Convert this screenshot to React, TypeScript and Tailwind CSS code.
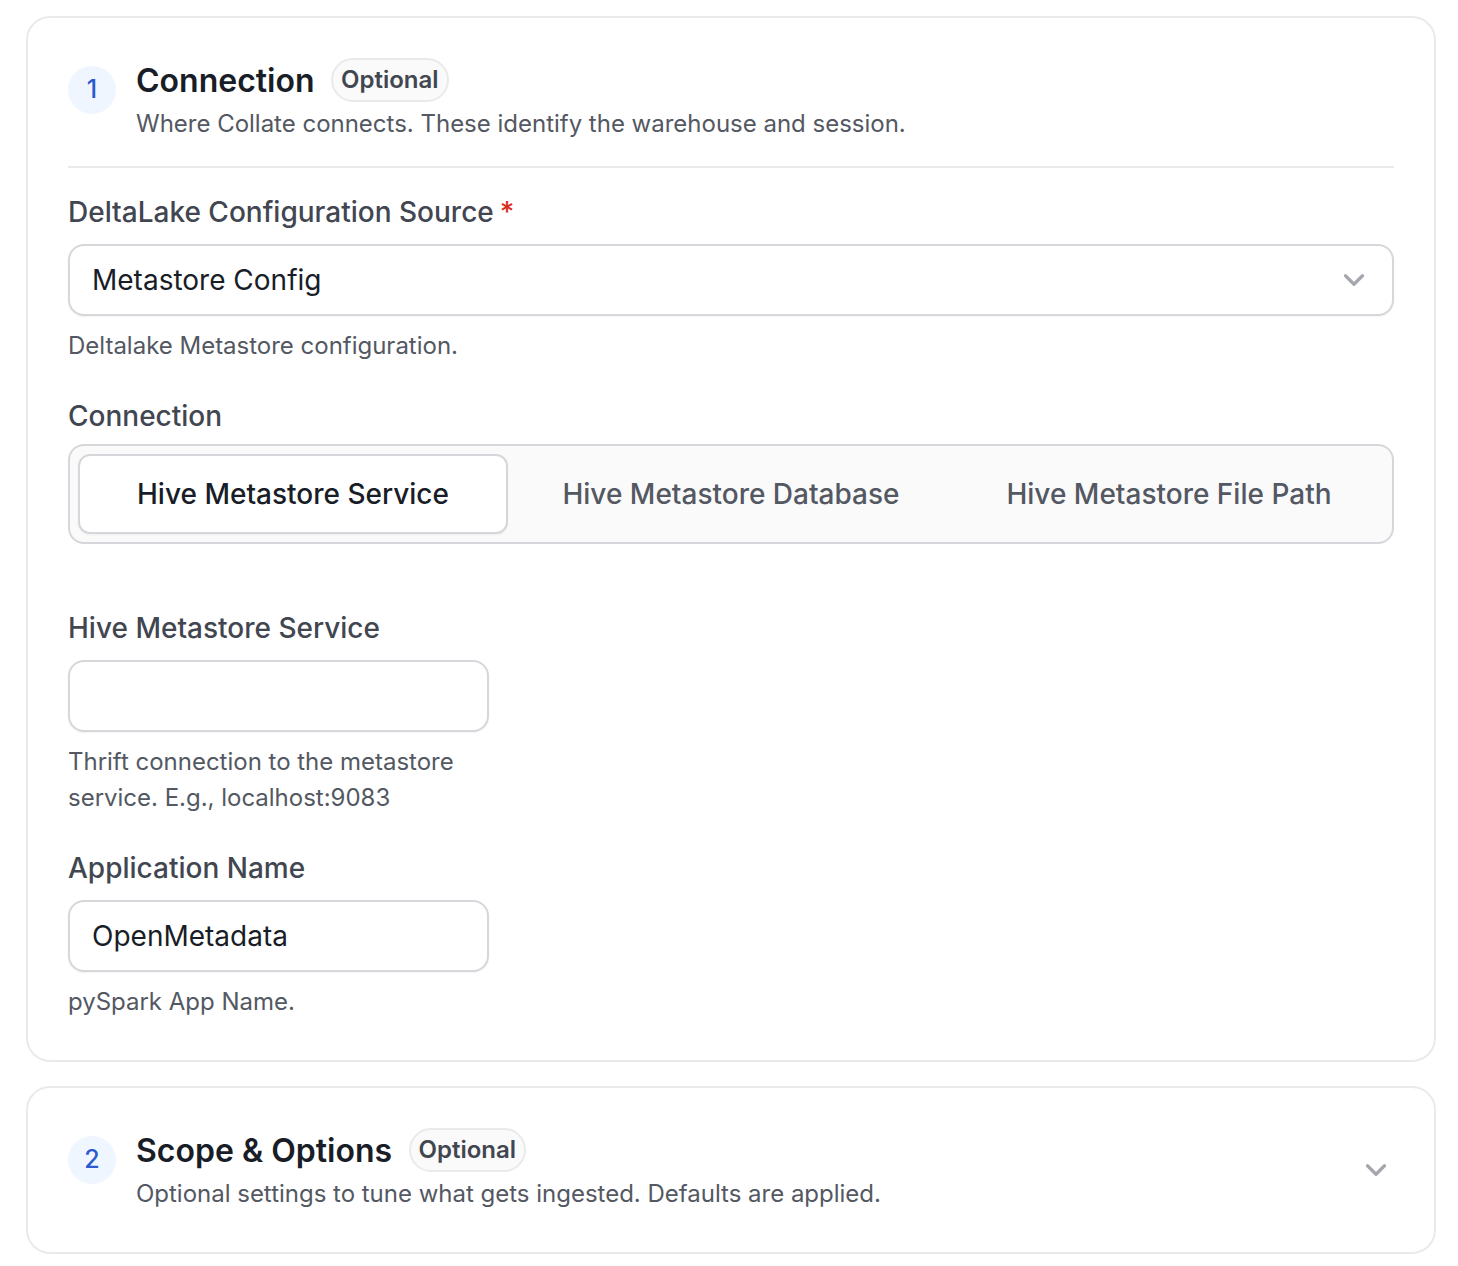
import React from 'react';
import { ChevronDown } from 'lucide-react';

const font = "font-['Inter',sans-serif]";

const SectionHeader: React.FC<{ step: number; title: string; description: string }> = ({
  step,
  title,
  description,
}) => {
  return (
    <div className="flex items-start gap-5">
      <div className="mt-2 flex h-12 w-12 shrink-0 items-center justify-center rounded-full bg-[#f0f6ff] text-[25px] font-medium text-[#2b5bd0]">
        {step}
      </div>
      <div>
        <div className="flex h-11 items-center gap-[16.5px]">
          <h2 className="pt-0.5 text-[32px] leading-[44px] font-semibold text-[#181d27]">{title}</h2>
          <span className="flex h-11 items-center rounded-full border-2 border-[#e9eaeb] bg-[#fafafa] px-2 text-[24px] font-semibold text-[#414651]">
            Optional
          </span>
        </div>
        <p className="mt-1 text-[24px] leading-9 tracking-[-0.01px] text-[#535862]">{description}</p>
      </div>
    </div>
  );
};

const Label: React.FC<{ children: React.ReactNode; required?: boolean }> = ({ children, required }) => (
  <div className="flex h-10 items-center text-[28px] font-medium text-[#414651]">
    {children}
    {required && <span className="ml-1.5 text-[#d92d20]">*</span>}
  </div>
);

const Help: React.FC<{ children: React.ReactNode }> = ({ children }) => (
  <p className="mt-3 text-[24px] leading-9 tracking-[-0.01px] text-[#535862]">{children}</p>
);

const TextBox: React.FC<{ value?: string }> = ({ value }) => (
  <div className="mt-3 flex h-[72px] w-[421px] items-center rounded-2xl border-2 border-[#d5d7da] bg-white px-[22px] text-[28px] text-[#181d27] shadow-xs">
    {value}
  </div>
);

export default function App() {
  return (
    <div className={`${font} min-h-screen bg-white pt-4 pr-[22px] pl-[26px]`}>
      {/* Step 1 */}
      <section className="rounded-3xl border-2 border-[#e9eaeb] px-10 pt-10 pb-10">
        <SectionHeader
          step={1}
          title="Connection"
          description="Where Collate connects. These identify the warehouse and session."
        />
        <div className="mt-6 h-0.5 bg-[#e9eaeb]" />

        <div className="mt-6">
          <Label required>DeltaLake Configuration Source</Label>
          <div className="mt-3 flex h-[72px] items-center justify-between rounded-2xl border-2 border-[#d5d7da] bg-white pr-[21px] pl-[22px] text-[28px] text-[#181d27] shadow-xs">
            <span>Metastore Config</span>
            <ChevronDown className="h-[34px] w-[34px] text-[#a4a7ae]" strokeWidth={2.25} />
          </div>
          <Help>Deltalake Metastore configuration.</Help>
        </div>

        <div className="mt-8">
          <Label>Connection</Label>
          <div className="mt-2 flex h-[100px] items-center gap-2 rounded-2xl border-2 border-[#d5d7da] bg-[#fafafa] px-2 text-[28px] font-medium text-[#535862]">
            <div className="flex h-20 flex-1 items-center justify-center rounded-xl border-2 border-[#d5d7da] bg-white text-[#181d27] shadow-xs">
              Hive Metastore Service
            </div>
            <div className="flex h-20 flex-1 items-center justify-center border-2 border-transparent">
              Hive Metastore Database
            </div>
            <div className="flex h-20 flex-1 items-center justify-center border-2 border-transparent">
              Hive Metastore File Path
            </div>
          </div>
        </div>

        <div className="mt-16">
          <Label>Hive Metastore Service</Label>
          <TextBox />
          <div className="w-[421px]">
            <Help>Thrift connection to the metastore service. E.g., localhost:9083</Help>
          </div>
        </div>

        <div className="mt-8">
          <Label>Application Name</Label>
          <TextBox value="OpenMetadata" />
          <Help>pySpark App Name.</Help>
        </div>
      </section>

      {/* Step 2 */}
      <section className="mt-6 flex items-center justify-between rounded-3xl border-2 border-[#e9eaeb] py-10 pr-[41px] pl-10">
        <SectionHeader
          step={2}
          title="Scope & Options"
          description="Optional settings to tune what gets ingested. Defaults are applied."
        />
        <ChevronDown className="h-[34px] w-[34px] text-[#a4a7ae]" strokeWidth={2.25} />
      </section>
    </div>
  );
}
